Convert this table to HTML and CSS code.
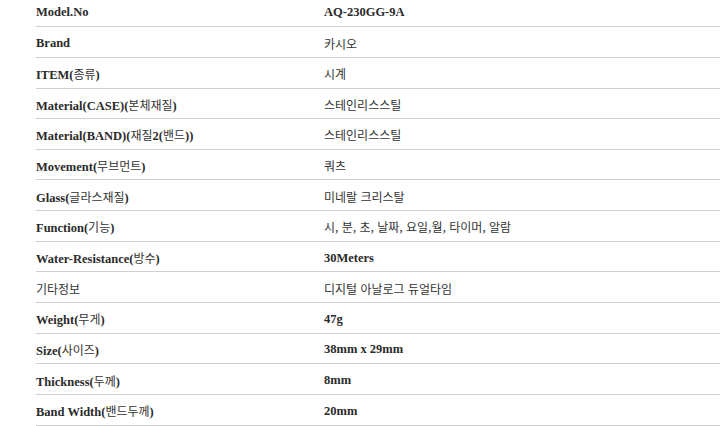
FILE: index.html
```html
<!DOCTYPE html>
<html lang="ko">
<head>
<meta charset="utf-8">
<link rel="stylesheet" href="styles.css">
</head>
<body>
<div class="spec">
  <div class="row"><div class="k">Model.No</div><div class="v">AQ-230GG-9A</div></div>
  <div class="row"><div class="k">Brand</div><div class="v"><span class="ko">카시오</span></div></div>
  <div class="row"><div class="k">ITEM(<span class="ko">종류</span>)</div><div class="v"><span class="ko">시계</span></div></div>
  <div class="row"><div class="k">Material(CASE)(<span class="ko">본체재질</span>)</div><div class="v"><span class="ko">스테인리스스틸</span></div></div>
  <div class="row"><div class="k">Material(BAND)(<span class="ko">재질</span>2(<span class="ko">밴드</span>))</div><div class="v"><span class="ko">스테인리스스틸</span></div></div>
  <div class="row"><div class="k">Movement(<span class="ko">무브먼트</span>)</div><div class="v"><span class="ko">쿼츠</span></div></div>
  <div class="row"><div class="k">Glass(<span class="ko">글라스재질</span>)</div><div class="v"><span class="ko">미네랄 크리스탈</span></div></div>
  <div class="row"><div class="k">Function(<span class="ko">기능</span>)</div><div class="v"><span class="ko">시, 분, 초, 날짜, 요일,월, 타이머, 알람</span></div></div>
  <div class="row"><div class="k">Water-Resistance(<span class="ko">방수</span>)</div><div class="v">30Meters</div></div>
  <div class="row"><div class="k"><span class="ko">기타정보</span></div><div class="v"><span class="ko">디지털 아날로그 듀얼타임</span></div></div>
  <div class="row"><div class="k">Weight(<span class="ko">무게</span>)</div><div class="v">47g</div></div>
  <div class="row"><div class="k">Size(<span class="ko">사이즈</span>)</div><div class="v">38mm x 29mm</div></div>
  <div class="row"><div class="k">Thickness(<span class="ko">두께</span>)</div><div class="v">8mm</div></div>
  <div class="row"><div class="k">Band Width(<span class="ko">밴드두께</span>)</div><div class="v">20mm</div></div>
</div>
</body>
</html>
```

FILE: styles.css
```css
html, body {
  margin: 0;
  padding: 0;
  background: #fff;
}
body {
  font-family: "Liberation Serif", "Noto Sans CJK KR", serif;
  font-size: 12.5px;
  font-weight: bold;
  color: #2a2a2a;
  overflow: hidden;
}
.spec {
  margin-left: 36px;
  margin-top: -3.4px;
}
.row {
  display: grid;
  grid-template-columns: 288px 1fr;
  align-items: center;
  height: 30.65px;
  box-sizing: border-box;
  border-bottom: 1px solid #cfcfcf;
  padding-top: 3px;
}
.k, .v {
  white-space: nowrap;
}
.ko {
  font-family: "Noto Sans CJK KR", sans-serif;
  font-weight: normal;
  font-size: 12px;
  color: #333;
}
```
